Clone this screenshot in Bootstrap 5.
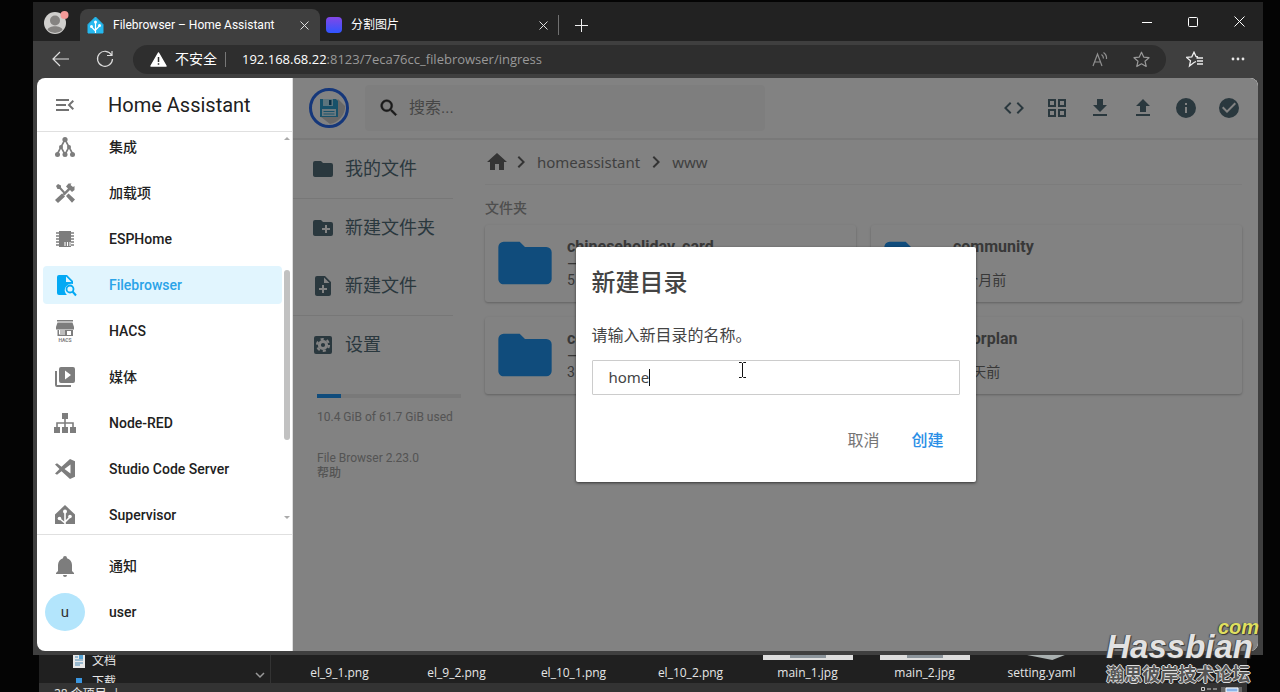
<!DOCTYPE html>
<html lang="zh-CN">
<head>
<meta charset="utf-8">
<meta name="viewport" content="width=device-width, initial-scale=1">
<title>Filebrowser – Home Assistant</title>
<link href="https://cdn.jsdelivr.net/npm/bootstrap@5.3.0/dist/css/bootstrap.min.css" rel="stylesheet">
<style>
  :root { --ui: "Open Sans", "Noto Sans CJK SC", sans-serif; --app: Roboto, "Noto Sans CJK SC", sans-serif; --wide: "Noto Sans", "Noto Sans CJK SC", sans-serif; }
  body { background: #040404; font-family: var(--app); overflow: hidden; }
  svg { display: block; flex: none; fill: currentColor; }
  button { border: 0; background: none; padding: 0; color: inherit; }
  a { color: inherit; text-decoration: none; }
  .desktop { height: 100vh; padding: 2px 17px 0 33px; }
  .browser { background: #3f3f3f; min-height: 0; padding-bottom: 4px; z-index: 1; }
  .tabstrip { height: 39px; background: #222; color: #fff; font: 12px/16px Roboto, "Noto Sans CJK SC", sans-serif; }
  .profile { width: 47px; height: 39px; }
  .tab-on { width: 240px; height: 32px; background: #3f3f3f; border-radius: 8px 8px 0 0; padding: 0 11px 0 7px; gap: 9px; }
  .tab-off { width: 238px; height: 32px; padding: 0 10px 0 6px; gap: 9px; }
  .tab-line { width: 1px; height: 20px; background: #707070; }
  .fav { width: 16px; height: 16px; border-radius: 4px; background: linear-gradient(#8347e6, #2f55ff); }
  .winbtns { gap: 32px; padding-right: 18px; }
  .toolbar { height: 37px; color: #e6e6e6; font: 13px/18px var(--ui); padding: 0 17px 1px 19px; gap: 26px; }
  .omni { height: 29px; border-radius: 15px; background: #2e2e2e; padding: 0 16px 0 17px; margin: 0 -6px 0 -7px; min-width: 0; }
  .omni-line { width: 1px; height: 15px; background: #777; }
  .omni-url { color: #999; }
  .frame { margin: 0 5px 0 4px; border-radius: 8px; overflow: hidden; min-height: 0; background: #fff; }
  .side { width: 256px; color: #7d7d7d; border-right: 1px solid #ddd; }
  .side-head { height: 54px; border-bottom: 1px solid #e0e0e0; padding-left: 16px; gap: 31px; color: #727272; }
  .side-head h1 { font-size: 20px; line-height: 24px; font-weight: 400; color: #212121; margin: 0; }
  .side-scroll { min-height: 0; overflow: hidden; position: relative; }
  .side-list { gap: 8px; padding: 0 10px 0 6px; margin: 0; list-style: none; }
  .side-list a { height: 38px; border-radius: 4px; padding-left: 10px; gap: 32px; font-size: 14px; line-height: 18px; font-weight: 500; }
  .side-list a span.lbl { color: #212121; }
  .side-list a.on { background: #e1f5fe; color: #03a9f4; }
  .side-list a.on span.lbl { color: #2aa3e8; }
  .side-list svg { width: 24px; height: 24px; }
  .side-foot { border-top: 1px solid #e0e0e0; padding: 12px 0 20px; }
  .side-list .user { padding-left: 2px; gap: 24px; }
  .face { width: 40px; height: 38px; border-radius: 50%; background: #b3e5fc; color: #333; font-size: 15px; font-weight: 400; }
  .thumb-bar { position: absolute; right: 2px; top: 138px; width: 6px; height: 170px; border-radius: 3px; background: #c1c1c1; }
  .arr { position: absolute; right: 2px; border: 3px solid transparent; }
  .arr-up { top: 2px; border-bottom-color: #aaa; }
  .arr-down { bottom: 12px; border-top-color: #aaa; }
  .fb { background: #fff; position: relative; min-width: 0; }
  .fb-head { height: 62px; border-bottom: 2px solid #eee; padding: 0 17px 0 16px; color: #546e7a; }
  .fb-find { width: 400px; height: 46px; background: #f8f8f8; border-radius: 4px; padding: 0 13px; margin-left: 16px; gap: 7px; color: #333; }
  .fb-find input { border: 0; background: none; outline: 0; font: 16px/24px var(--app); min-width: 0; }
  .fb-find input::placeholder { color: #8a8a8a; }
  .fb-acts { gap: 19px; }
  .fb-nav { width: 160px; font-size: 18px; line-height: 24px; color: #546e7a; }
  .fb-nav a { padding-left: 18px; gap: 10px; height: 58px; }
  .fb-nav .grp { border-bottom: 1px solid #eaeaea; }
  .fb-use { padding: 20px 0 0 24px; font-size: 12px; line-height: 15px; color: #a5a5a5; }
  .fb-bar { height: 4px; width: 144px; background: #eee; border-radius: 0; margin-bottom: 12px; }
  .fb-bar .progress-bar { background: #2196f3; }
  .fb-ver { padding-top: 26px; }
  .fb-body { padding: 0 16px 0 32px; color: #6f6f6f; min-width: 0; }
  .crumbs { height: 45px; border-bottom: 1px solid #f4f4f4; font: 15px/20px var(--wide); color: #7d7d7d; }
  .crumbs svg { color: #666; }
  .fb-body h2 { font-size: 14px; line-height: 18px; font-weight: 500; margin: 14px 0 8px; color: #999; }
  .tiles { display: grid; grid-template-columns: 1fr 1fr; gap: 15px; }
  .tile { height: 77px; border-radius: 3px; box-shadow: 0 1px 3px #0002, 0 1px 2px #0002; padding: 0 8px 2px; gap: 10px; }
  .tile svg { color: #2196f3; }
  .tile b { font-size: 16px; line-height: 18px; font-weight: 700; color: #6f6f6f; }
  .tile span { font-size: 14px; line-height: 16px; }
  .veil { position: absolute; inset: 0; background: rgba(0,0,0,.49); }
  .dlg { width: 400px; background: #fff; border-radius: 2px; padding: 20px 16px 30px; box-shadow: 0 1px 3px #0009; color: #444; position: relative; }
  .dlg h3 { font-size: 24px; line-height: 32px; font-weight: 500; margin: 0 0 26px; }
  .dlg label { font-size: 16px; line-height: 22px; margin-bottom: 13px; }
  .dlg input { font: 15px/20px var(--wide); height: 35px; border: 1px solid #ccc; border-radius: 1px; padding: 0 16px 2px; color: #444; }
  .dlg .acts { font-size: 16px; line-height: 22px; margin-top: 35px; gap: 32px; padding-right: 16px; }
  .caret { position: absolute; left: 73px; top: 122px; width: 1px; height: 17px; background: #111; }
  .ibeam { position: absolute; left: 162px; top: 115px; color: #111; }
  .files { height: 37px; margin: 0 16px 0 6px; background: #202020; color: #e6e6e6; font: 12px/16px var(--ui); overflow: hidden; }
  .files-top { height: 28px; overflow: hidden; }
  .tree { width: 232px; border-right: 1px solid #333; padding-left: 34px; position: relative; }
  .tree div { height: 22px; gap: 7px; }
  .tree div:first-child { height: 12px; }
  .tree div + div { margin-top: 4px; }
  .pics { padding-left: 10px; }
  .pic { width: 117px; }
  .pic i { height: 5px; width: 90px; margin-bottom: 5px; }
  .pic i.lit { background: linear-gradient(90deg, transparent 30%, #8b949b 30% 70%, transparent 70%) top/100% 3px no-repeat, #ddd; }
  .pic i.tip { background: #a9b0b0; clip-path: polygon(34% 0, 76% 0, 62% 100%); }
  .files-status { height: 9px; background: #333; padding: 4px 4px 0 15px; line-height: 14px; }
  .mark-wrap { position: absolute; right: 27px; bottom: 7px; z-index: 3; pointer-events: none; color: #e2e2e2; font: italic 700 33px/28px "Liberation Sans", sans-serif; text-shadow: 1px 1px 1px #333, -1px 0 1px #444; }
  .mark-com { display: block; font-size: 20px; line-height: 12px; color: #dfdf60; text-align: right; margin-right: -6px; }
  .mark-cn { font: 700 18px/24px "Noto Sans CJK SC", sans-serif; color: #555; text-shadow: 1px 0 #ddd, -1px 0 #ddd, 0 1px #ddd, 0 -1px #ddd; }
</style>
</head>
<body>
<div class="desktop d-flex flex-column">
  <div class="browser d-flex flex-column flex-grow-1 position-relative">
    <div class="tabstrip d-flex align-items-end flex-shrink-0">
      <button class="profile d-flex align-items-center justify-content-center" aria-label="Profile">
        <svg width="26" height="26" viewBox="0 0 26 26"><circle cx="11" cy="14" r="11" fill="#d0cfcd"/><circle cx="11" cy="11.500" r="5" fill="#858381"/><path d="M3.500 21c1-5 14-5 15 0a11 11 0 0 1-15 0z" fill="#858381"/><circle cx="20.500" cy="6" r="4" fill="#f59a98"/></svg>
      </button>
      <div class="tab-on d-flex align-items-center">
        <svg width="17" height="18" viewBox="0 0 17 18"><path d="M8.500 1 16 8.500V17H1V8.500z" fill="#25b8ef" stroke="#25b8ef" stroke-linejoin="round"/><path d="M8.500 6v11M8.500 15 4.500 11M8.500 14l4-4" stroke="#fff" stroke-width="1.200" fill="none"/><g fill="#fff"><circle cx="8.500" cy="6" r="1.500"/><circle cx="4.500" cy="10.500" r="1.500"/><circle cx="12.500" cy="9.500" r="1.500"/></g></svg>
        <span class="me-auto text-nowrap">Filebrowser – Home Assistant</span>
        <button aria-label="Close tab"><svg width="9" height="9" viewBox="0 0 9 9"><path d="m.5.5 8 8m0-8-8 8" stroke="#ddd" fill="none"/></svg></button>
      </div>
      <div class="tab-off d-flex align-items-center">
        <span class="fav"></span><span class="me-auto text-nowrap">分割图片</span>
        <button aria-label="Close tab"><svg width="9" height="9" viewBox="0 0 9 9"><path d="m.5.5 8 8m0-8-8 8" stroke="#ddd" fill="none"/></svg></button>
      </div>
      <div class="d-flex align-items-center gap-3" style="height:32px">
        <span class="tab-line"></span>
        <button aria-label="New tab"><svg width="13" height="13" viewBox="0 0 13 13"><path d="M6.500 0v13M0 6.500h13" stroke="#eee" fill="none"/></svg></button>
      </div>
      <div class="winbtns ms-auto d-flex align-items-center align-self-center">
        <button class="me-1" aria-label="Minimize"><svg width="10" height="10" viewBox="0 0 10 10"><path d="M0 5.500h10" stroke="#fff"/></svg></button>
        <button class="me-1" aria-label="Maximize"><svg width="10" height="10" viewBox="0 0 10 10"><rect x=".5" y=".5" width="9" height="9" rx="1" stroke="#fff" fill="none"/></svg></button>
        <button aria-label="Close"><svg width="11" height="11" viewBox="0 0 11 11"><path d="m.5.5 10 10m0-10-10 10" stroke="#fff"/></svg></button>
      </div>
    </div>
    <div class="toolbar d-flex align-items-center flex-shrink-0">
      <button aria-label="Back"><svg width="18" height="16" viewBox="0 0 18 16"><path d="M8 1 1 8l7 7M1 8h16" stroke="#ddd" stroke-width="1.200" fill="none"/></svg></button>
      <button aria-label="Reload"><svg width="18" height="18" viewBox="0 0 18 18"><path d="M15.500 5A7.500 7.500 0 1 0 16.500 9M16 1v4.500h-5" stroke="#ddd" stroke-width="1.200" fill="none"/></svg></button>
      <div class="omni flex-grow-1 d-flex align-items-center">
        <svg width="17" height="15" viewBox="0 0 17 15"><path d="M8.500 1 16 14H1z" fill="#fff" stroke="#fff" stroke-width="1.500" stroke-linejoin="round"/><path d="M8.500 5v5M8.500 11.200v1.500" stroke="#2e2e2e" stroke-width="1.500"/></svg>
        <span class="text-white ms-2" style="font-size:14px">不安全</span>
        <span class="omni-line ms-2 ps-0 me-3"></span>
        <span class="omni-url text-nowrap flex-grow-1"><span class="text-white">192.168.68.22</span>:8123/7eca76cc_filebrowser/ingress</span>
        <svg width="17" height="16" viewBox="0 0 17 16"><path d="M1 15 5.500 3 10 15M2.500 11h6M9.500 3.500q2 1.500 2 4M11.500 1.500q3.500 2.500 3 6.500" stroke="#909090" stroke-width="1.200" fill="none"/></svg>
        <svg class="ms-4" width="17" height="17" viewBox="0 0 17 17"><path d="m8.500 1.200 2.200 4.900 5.300.6-4 3.500 1.200 5.300-4.700-2.700-4.700 2.700L5 10.200 1 6.700l5.300-.6z" stroke="#999" stroke-width="1.200" fill="none" stroke-linejoin="round"/></svg>
      </div>
      <button aria-label="Favorites"><svg width="18" height="17" viewBox="0 0 18 17"><path d="M10 10.500 8 11.500 3.500 15l1-5.200-4-3.400 5.300-.6L8 1.200l2 4.300 2 .5M10.500 7H17M11 10h6M11 13h6" stroke="#eee" stroke-width="1.300" fill="none"/></svg></button>
      <button aria-label="More"><svg width="16" height="4" viewBox="0 0 16 4"><circle cx="3" cy="2" r="1.400"/><circle cx="8" cy="2" r="1.400"/><circle cx="13" cy="2" r="1.400"/></svg></button>
    </div>

    <div class="frame d-flex flex-grow-1">
      <aside class="side d-flex flex-column flex-shrink-0">
        <div class="side-head d-flex align-items-center flex-shrink-0">
          <button aria-label="Toggle sidebar"><svg width="24" height="24" viewBox="0 0 24 24"><path d="M21 15.600 19.600 17l-5-5 5-5L21 8.400 17.400 12zM3 6h13v2H3zm0 7v-2h10v2zm0 5v-2h13v2z"/></svg></button>
          <h1>Home Assistant</h1>
        </div>
        <div class="side-scroll flex-grow-1 d-flex flex-column justify-content-end">
          <ul class="side-list d-flex flex-column">
            <li><a href="#" class="d-flex align-items-center"><svg viewBox="0 0 24 24"><path d="M12 4.500 8 12l-4 7.500M12 4.500 16 12l4 7.500M8 12l4 7.500 4-7.500" stroke="currentColor" stroke-width="1.600" fill="none"/><circle cx="12" cy="4.500" r="2.600"/><circle cx="8" cy="12" r="2"/><circle cx="16" cy="12" r="2"/><circle cx="4.500" cy="19.500" r="2.500"/><circle cx="12" cy="19.500" r="2.500"/><circle cx="19.500" cy="19.500" r="2.500"/></svg><span class="lbl">集成</span></a></li>
            <li><a href="#" class="d-flex align-items-center"><svg viewBox="0 0 24 24"><path d="M3 5l2-2 3 1.500v2L13 12l-1.500 1.500L6.500 8h-2zM13 15l2.500-2.500L22 18.500 19 21.800zM2 19l7-6.500 3 3L5 22zM9.500 13 15 7.500 13 5.500l2.500-3h3l-1 1.500L20 6l1.500-1v4L19 11l-2-2-5.500 5.500z"/></svg><span class="lbl">加载项</span></a></li>
            <li><a href="#" class="d-flex align-items-center"><svg viewBox="0 0 24 24"><path d="M6 4h12v16H6z"/><path d="M3 6h18M3 9h18M3 12h18M3 15h18M3 18h18" stroke="currentColor" stroke-width="1.500"/><path d="M12 19v-4M14.500 19v-4M17 19v-4" stroke="#fff" stroke-width="1.100"/></svg><span class="lbl">ESPHome</span></a></li>
            <li><a href="#" class="on d-flex align-items-center"><svg viewBox="0 0 24 24"><path d="M6 2h8l6 6v3a6.500 6.500 0 0 0-7 10l1 1H6a2 2 0 0 1-2-2V4a2 2 0 0 1 2-2zm7 1.500V9h5.500z" fill-rule="evenodd"/><circle cx="17" cy="16" r="3.500" fill="none" stroke="currentColor" stroke-width="1.800"/><path d="m19.500 18.500 3.500 4" stroke="currentColor" stroke-width="2"/></svg><span class="lbl">Filebrowser</span></a></li>
            <li><a href="#" class="d-flex align-items-center"><svg viewBox="0 0 24 24"><path d="M4 1h16v1.500H4zM4.500 3.500h15L21 8v2.500H3V8zM4.500 10H6v5.500h6V11h8v6H4.500zm9.500 2v4h4v-4z" fill-rule="evenodd"/><path d="M7 11h5v4H7z" opacity=".5"/><text x="12" y="23" text-anchor="middle" font-size="5" font-weight="700">HACS</text></svg><span class="lbl">HACS</span></a></li>
            <li><a href="#" class="d-flex align-items-center"><svg viewBox="0 0 24 24"><path d="M4 6H2v14a2 2 0 0 0 2 2h14v-2H4zm16-4H8a2 2 0 0 0-2 2v12a2 2 0 0 0 2 2h12a2 2 0 0 0 2-2V4a2 2 0 0 0-2-2zm-8 12.500v-9l6 4.500z"/></svg><span class="lbl">媒体</span></a></li>
            <li><a href="#" class="d-flex align-items-center"><svg viewBox="0 0 24 24"><path d="M9 2h6v6H9zM1 16h6v6H1zm8 0h6v6H9zm8 0h6v6h-6z"/><path d="M12 8v8M4 16v-4h16v4" fill="none" stroke="currentColor" stroke-width="1.600"/></svg><span class="lbl">Node-RED</span></a></li>
            <li><a href="#" class="d-flex align-items-center"><svg viewBox="0 0 24 24"><path d="m17 2 5 2.300v15.400L17 22l-8.500-7.800L4 17.700l-2-1.200L6.500 12 2 7.500l2-1.200 4.500 3.500zm.5 5.500L11.500 12l6 4.500z" fill-rule="evenodd"/></svg><span class="lbl">Studio Code Server</span></a></li>
            <li><a href="#" class="d-flex align-items-center"><svg viewBox="0 0 24 24"><path d="M12 2 22 11.500V21H2v-9.500z"/><path d="M12 8v14M12 20l-5-4M12 19l5-5" stroke="#fff" stroke-width="1.600" fill="none"/><g fill="#fff"><circle cx="12" cy="8.500" r="2"/><circle cx="6.500" cy="15.500" r="1.800"/><circle cx="17" cy="13.500" r="1.800"/></g></svg><span class="lbl">Supervisor</span></a></li>
          </ul>
          <span class="arr arr-up"></span><span class="thumb-bar"></span><span class="arr arr-down"></span>
        </div>
        <div class="side-foot flex-shrink-0">
          <ul class="side-list d-flex flex-column">
            <li><a href="#" class="d-flex align-items-center"><svg viewBox="0 0 24 24"><path d="M21 19v1H3v-1l2-2v-6c0-3.100 2-5.800 5-6.700V4a2 2 0 0 1 4 0v.3c3 .9 5 3.600 5 6.700v6zm-7 2a2 2 0 0 1-4 0"/></svg><span class="lbl">通知</span></a></li>
            <li><a href="#" class="user d-flex align-items-center"><span class="face d-flex align-items-center justify-content-center">u</span><span class="lbl">user</span></a></li>
          </ul>
        </div>
      </aside>

      <main class="fb flex-grow-1">
        <header class="fb-head d-flex align-items-center">
          <svg width="40" height="40" viewBox="0 0 40 40"><circle cx="20" cy="20" r="18.500" fill="#fff" stroke="#2a6cf0" stroke-width="3"/><path d="m29 11 7 7c1 8-7 17-15 18l-9-7z" fill="#ccc"/><path d="M11 11h16l2 2v16H11z" fill="#2f9fd0"/><path d="M14 11h10v7H14z" fill="#b5e4f6"/><path d="M20 12h2.500v5H20z" fill="#145a86"/><path d="M13 21h14v7H13z" fill="#d5eef8"/><path d="M14.500 23.500h11M14.500 26h11" stroke="#2f9fd0"/></svg>
          <div class="fb-find d-flex align-items-center"><svg width="22" height="22" viewBox="0 0 24 24"><path d="M15.500 14h-.8l-.3-.3A6.500 6.500 0 1 0 13.700 14.400l.3.3v.8l5 5 1.500-1.500zm-6 0a4.500 4.500 0 1 1 0-9 4.500 4.500 0 0 1 0 9z" stroke="currentColor" stroke-width=".5"/></svg><input type="text" placeholder="搜索..." aria-label="搜索"></div>
          <div class="fb-acts ms-auto d-flex">
            <button aria-label="Shell"><svg width="24" height="24" viewBox="0 0 24 24"><path d="M9.400 16.600 4.800 12l4.600-4.600L8 6l-6 6 6 6zm5.200 0 4.600-4.600-4.600-4.600L16 6l6 6-6 6z"/></svg></button>
            <button aria-label="View"><svg width="24" height="24" viewBox="0 0 24 24"><path d="M4 4h6v6H4zM14 4h6v6h-6zM4 14h6v6H4zM14 14h6v6h-6z" fill="none" stroke="currentColor" stroke-width="2"/></svg></button>
            <button aria-label="Download"><svg width="24" height="24" viewBox="0 0 24 24"><path d="M19 9h-4V3H9v6H5l7 7zM5 18v2h14v-2z"/></svg></button>
            <button aria-label="Upload"><svg width="24" height="24" viewBox="0 0 24 24"><path d="M9 16h6v-6h4l-7-7-7 7h4zm-4 2h14v2H5z"/></svg></button>
            <button aria-label="Info"><svg width="24" height="24" viewBox="0 0 24 24"><path d="M12 2a10 10 0 1 0 0 20 10 10 0 0 0 0-20zm1 15h-2v-6h2zm0-8h-2V7h2z"/></svg></button>
            <button aria-label="Select"><svg width="24" height="24" viewBox="0 0 24 24"><path d="M12 2a10 10 0 1 0 0 20 10 10 0 0 0 0-20zm-2 15-5-5 1.400-1.400 3.600 3.600 7.600-7.600L19 8z"/></svg></button>
          </div>
        </header>
        <div class="d-flex">
          <nav class="fb-nav flex-shrink-0">
            <div class="grp"><a href="#" class="d-flex align-items-center"><svg width="24" height="24" viewBox="0 0 24 24"><path d="M10 4H4a2 2 0 0 0-2 2v12c0 1.100.9 2 2 2h16a2 2 0 0 0 2-2V8a2 2 0 0 0-2-2h-8z"/></svg>我的文件</a></div>
            <div class="grp">
              <a href="#" class="d-flex align-items-center"><svg width="24" height="24" viewBox="0 0 24 24"><path d="M20 6h-8l-2-2H4a2 2 0 0 0-2 2v12c0 1.100.9 2 2 2h16a2 2 0 0 0 2-2V8a2 2 0 0 0-2-2zm-1 8h-3v3h-2v-3h-3v-2h3V9h2v3h3z"/></svg><span class="text-nowrap">新建文件夹</span></a>
              <a href="#" class="d-flex align-items-center"><svg width="24" height="24" viewBox="0 0 24 24"><path d="M14 2H6a2 2 0 0 0-2 2v16c0 1.100.9 2 2 2h12a2 2 0 0 0 2-2V8zm2 14h-3v3h-2v-3H8v-2h3v-3h2v3h3zm-3-7V3.500L18.500 9z"/></svg>新建文件</a>
            </div>
            <a href="#" class="d-flex align-items-center"><svg width="24" height="24" viewBox="0 0 24 24"><rect x="3" y="3" width="18" height="18" rx="2"/><g fill="none" stroke="#fff"><circle cx="12" cy="12" r="3.600" stroke-width="3"/><circle cx="12" cy="12" r="6" stroke-width="2.200" stroke-dasharray="3.140 3.140"/></g></svg>设置</a>
            <div class="fb-use">
              <div class="progress fb-bar"><div class="progress-bar" style="width:17%"></div></div>
              <div class="text-nowrap">10.4 GiB of 61.7 GiB used</div>
              <div class="fb-ver">File Browser 2.23.0</div>
              <div class="fw-medium">帮助</div>
            </div>
          </nav>
          <section class="fb-body flex-grow-1">
            <div class="crumbs d-flex align-items-center"><svg width="24" height="24" viewBox="0 0 24 24"><path d="M10 20v-6h4v6h5v-8h3L12 3 2 12h3v8z"/></svg><svg width="24" height="24" viewBox="0 0 24 24"><path d="M10 6 8.600 7.400l4.600 4.600-4.600 4.600L10 18l6-6z"/></svg><a class="ms-1" href="#">homeassistant</a><svg class="mx-1" width="24" height="24" viewBox="0 0 24 24"><path d="M10 6 8.600 7.400l4.600 4.600-4.600 4.600L10 18l6-6z"/></svg><a href="#">www</a></div>
            <h2>文件夹</h2>
            <div class="tiles">
              <div class="tile d-flex align-items-center"><svg width="64" height="64" viewBox="0 0 24 24"><path d="M10 4H4a2 2 0 0 0-2 2v12c0 1.100.9 2 2 2h16a2 2 0 0 0 2-2V8a2 2 0 0 0-2-2h-8z"/></svg><div class="d-flex flex-column"><b>chineseholiday_card</b><span>—</span><span>5 个月前</span></div></div>
              <div class="tile d-flex align-items-center"><svg width="64" height="64" viewBox="0 0 24 24"><path d="M10 4H4a2 2 0 0 0-2 2v12c0 1.100.9 2 2 2h16a2 2 0 0 0 2-2V8a2 2 0 0 0-2-2h-8z"/></svg><div class="d-flex flex-column"><b>community</b><span>—</span><span>5 个月前</span></div></div>
              <div class="tile d-flex align-items-center"><svg width="64" height="64" viewBox="0 0 24 24"><path d="M10 4H4a2 2 0 0 0-2 2v12c0 1.100.9 2 2 2h16a2 2 0 0 0 2-2V8a2 2 0 0 0-2-2h-8z"/></svg><div class="d-flex flex-column"><b>config</b><span>—</span><span>3 个月前</span></div></div>
              <div class="tile d-flex align-items-center"><svg width="64" height="64" viewBox="0 0 24 24"><path d="M10 4H4a2 2 0 0 0-2 2v12c0 1.100.9 2 2 2h16a2 2 0 0 0 2-2V8a2 2 0 0 0-2-2h-8z"/></svg><div class="d-flex flex-column"><b>floorplan</b><span>—</span><span>27 天前</span></div></div>
            </div>
          </section>
        </div>
        <div class="veil d-flex align-items-center justify-content-center">
          <form class="dlg" role="dialog" aria-labelledby="dlg-title">
            <h3 id="dlg-title">新建目录</h3>
            <label class="d-block" for="dir-name">请输入新目录的名称。</label>
            <input class="d-block w-100" id="dir-name" type="text" value="home">
            <div class="acts d-flex justify-content-end"><button type="button" style="color:#757575">取消</button><button type="button" class="fw-medium" style="color:#2b8fe6">创建</button></div>
            <span class="caret"></span>
            <svg class="ibeam" width="9" height="16" viewBox="0 0 9 16"><path d="M1 .5h2.500l1 1 1-1H8M4.500 1v14M1 15.500h2.500l1-1 1 1H8" stroke="currentColor" fill="none"/></svg>
          </form>
        </div>
      </main>
    </div>
  </div>

  <div class="files flex-shrink-0">
    <div class="files-top d-flex">
      <div class="tree flex-shrink-0">
        <div class="d-flex align-items-center"><svg width="12" height="14" viewBox="0 0 12 14"><path d="M0 0h12v14H0z" fill="#e8e8e8"/><path d="M2 3h3M2 6h8M2 9h8M2 11h5" stroke="#4a8ab5"/><path d="M6 1h4v4H6z" fill="#57a5d6"/></svg>文档</div>
        <div class="d-flex align-items-center"><svg width="12" height="14" viewBox="0 0 12 14"><path d="M3 3h6v11H3z" fill="#3a96e0"/></svg>下载</div>
        <svg class="position-absolute bottom-0 end-0 me-1 mb-1" width="12" height="7" viewBox="0 0 12 7"><path d="m2 1 4 4 4-4" stroke="#999" stroke-width="1.500" fill="none"/></svg>
      </div>
      <div class="pics d-flex">
        <div class="pic d-flex flex-column align-items-center"><i></i>el_9_1.png</div>
        <div class="pic d-flex flex-column align-items-center"><i></i>el_9_2.png</div>
        <div class="pic d-flex flex-column align-items-center"><i></i>el_10_1.png</div>
        <div class="pic d-flex flex-column align-items-center"><i></i>el_10_2.png</div>
        <div class="pic d-flex flex-column align-items-center"><i class="lit"></i>main_1.jpg</div>
        <div class="pic d-flex flex-column align-items-center"><i class="lit"></i>main_2.jpg</div>
        <div class="pic d-flex flex-column align-items-center"><i class="tip"></i>setting.yaml</div>
      </div>
    </div>
    <div class="files-status d-flex justify-content-between"><span>28 个项目 &nbsp;|</span><svg width="42" height="5" viewBox="0 0 42 5"><path d="M.5.5h3v3h-3zM6 2h4M12 2h4" stroke="#ccc" fill="none"/><path d="M20 0h21v5H20z" fill="#666"/><path d="M25 1h12v4H25z" fill="#8ab4e8" stroke="#fff"/></svg></div>
  </div>
</div>
<div class="mark-wrap"><span class="mark-com">com</span>Hassbian<div class="mark-cn fst-normal">瀚思彼岸技术论坛</div></div>
<script src="https://cdn.jsdelivr.net/npm/bootstrap@5.3.0/dist/js/bootstrap.bundle.min.js"></script>
</body>
</html>
